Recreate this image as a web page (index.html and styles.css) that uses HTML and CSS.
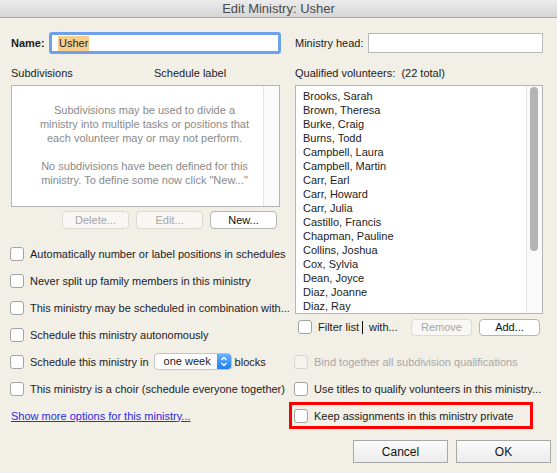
FILE: index.html
```html
<!DOCTYPE html>
<html>
<head>
<meta charset="utf-8">
<link rel="stylesheet" href="styles.css">
</head>
<body>
<div class="window">
  <div class="titlebar">Edit Ministry: Usher</div>
  <div class="main">
    <div class="col left">
      <div class="field-row">
        <span class="name-label">Name:</span>
        <div class="input focus"><span class="sel">Usher</span></div>
      </div>
      <div class="headers"><span class="sub-h">Subdivisions</span><span>Schedule label</span></div>
      <div class="subbox">
        <div class="subtext">
          <p>Subdivisions may be used to divide a<br>ministry into multiple tasks or positions that<br>each volunteer may or may not perform.</p>
          <p>No subdivisions have been defined for this<br>ministry. To define some now click "New..."</p>
        </div>
        <div class="track"></div>
      </div>
      <div class="btnrow">
        <div class="btn small disabled">Delete...</div>
        <div class="btn small disabled">Edit...</div>
        <div class="btn small">New...</div>
      </div>
      <div class="checks">
        <div class="row"><span class="cb"></span>Automatically number or label positions in schedules</div>
        <div class="row"><span class="cb"></span>Never split up family members in this ministry</div>
        <div class="row"><span class="cb"></span>This ministry may be scheduled in combination with...</div>
        <div class="row"><span class="cb"></span>Schedule this ministry autonomously</div>
        <div class="row"><span class="cb"></span>Schedule this ministry in
          <span class="popup"><span class="popup-text">one week</span><span class="popup-arrow"><svg width="8" height="11" viewBox="0 0 8 11"><path d="M1.5 4 L4 1.5 L6.5 4 M1.5 7 L4 9.5 L6.5 7" fill="none" stroke="#fff" stroke-width="1.3"/></svg></span></span>
          <span class="after-popup">blocks</span></div>
        <div class="row"><span class="cb"></span>This ministry is a choir (schedule everyone together)</div>
        <div class="row"><a class="link" href="#">Show more options for this ministry...</a></div>
      </div>
    </div>
    <div class="col right">
      <div class="field-row">
        <span class="head-label">Ministry head:</span>
        <div class="input plain"></div>
      </div>
      <div class="headers"><span>Qualified volunteers:&nbsp; (22 total)</span></div>
      <div class="listbox">
        <div class="items">
          <div>Brooks, Sarah</div>
          <div>Brown, Theresa</div>
          <div>Burke, Craig</div>
          <div>Burns, Todd</div>
          <div>Campbell, Laura</div>
          <div>Campbell, Martin</div>
          <div>Carr, Earl</div>
          <div>Carr, Howard</div>
          <div>Carr, Julia</div>
          <div>Castillo, Francis</div>
          <div>Chapman, Pauline</div>
          <div>Collins, Joshua</div>
          <div>Cox, Sylvia</div>
          <div>Dean, Joyce</div>
          <div>Diaz, Joanne</div>
          <div>Diaz, Ray</div>
        </div>
        <div class="track list-track"><div class="thumb"></div></div>
      </div>
      <div class="filter-row">
        <span class="cb"></span>
        <span class="filter-text">Filter list</span>
        <span class="caret"></span>
        <span class="with">with...</span>
        <div class="btn mid disabled remove">Remove</div>
        <div class="btn mid">Add...</div>
      </div>
      <div class="rchecks">
        <div class="row dis"><span class="cb disabled"></span>Bind together all subdivision qualifications</div>
        <div class="row"><span class="cb"></span>Use titles to qualify volunteers in this ministry...</div>
        <div class="row highlight"><span class="cb"></span>Keep assignments in this ministry private</div>
      </div>
    </div>
  </div>
  <div class="footer">
    <div class="btn big">Cancel</div>
    <div class="btn big">OK</div>
  </div>
</div>
</body>
</html>
```
FILE: styles.css
```css
* { box-sizing: border-box; }
html, body { margin: 0; padding: 0; }
body {
  width: 557px;
  height: 473px;
  overflow: hidden;
  background: #f2efe7;
  font-family: "Liberation Sans", Arial, sans-serif;
  font-size: 11px;
  color: #1c1c1c;
}
.window { width: 557px; height: 473px; }
.titlebar {
  height: 18px;
  line-height: 17px;
  text-align: center;
  font-size: 13px;
  color: #4a4a4a;
  background: linear-gradient(#ececec, #d6d6d6);
  border-bottom: 1px solid #a9a9a9;
}
.main {
  display: flex;
  padding: 14px 0 0 11px;
  gap: 15px;
}
.col.left { width: 269px; }
.col.right { width: 248px; }

.field-row {
  display: flex;
  align-items: center;
  height: 22px;
}
.name-label { font-weight: bold; width: 38px; }
.input { background: #fff; height: 22px; }
.input.focus {
  flex: 1;
  border: 3px solid #6ea1ec;
  border-radius: 3px;
  padding: 1px 0 0 6px;
  line-height: 14px;
  margin-right: -1px;
}
.sel { background: #f9cd8e; padding: 0 1px 1px; display: inline-block; line-height: 14px; }
.head-label { width: 73px; }
.input.plain {
  width: 175px;
  height: 20px;
  border: 1px solid #b9b9b9;
}

.headers {
  margin-top: 12px;
  height: 14px;
  line-height: 14px;
  display: flex;
}
.sub-h { width: 143px; }

.subbox {
  margin-top: 5px;
  height: 122px;
  border: 1px solid #b5b5b5;
  background: #fff;
  display: flex;
}
.subtext {
  flex: 1;
  padding: 17px 0 0 14px;
  text-align: center;
  color: #8a8a8a;
  line-height: 14px;
}
.subtext p { margin: 0 0 14px; }
.track {
  width: 16px;
  background: #fafafa;
  border-left: 1px solid #e6e6e6;
}

.btnrow {
  margin-top: 4px;
  height: 18px;
  display: flex;
  justify-content: flex-end;
  gap: 7px;
  padding-right: 3px;
}
.btn {
  display: flex;
  align-items: center;
  justify-content: center;
  background: #fff;
  border: 1px solid #b4b4b4;
  border-radius: 4px;
  color: #111;
  flex: none;
}
.btn.small { width: 67px; height: 18px; }
.btn.disabled { background: #f8f7f3; border-color: #dcdad4; color: #a6a6a6; }

.checks { margin-top: 11px; }
.row {
  height: 27px;
  display: flex;
  align-items: center;
  white-space: nowrap;
}
.cb {
  width: 14px;
  height: 14px;
  border: 1px solid #a4a4a4;
  border-radius: 3px;
  background: #fff;
  margin: 0 6px 0 -1px;
  flex: none;
}
.cb.disabled { background: #f5f3ee; border-color: #d6d4ce; }
.row.dis { color: #a8a8a8; }

.popup {
  display: inline-flex;
  width: 78px;
  height: 17px;
  margin-left: 5px;
  border: 1px solid #c3c3c3;
  border-radius: 4px;
  background: #fff;
  overflow: hidden;
}
.popup-text { flex: 1; padding-left: 9px; line-height: 15px; }
.popup-arrow {
  width: 14px;
  background: linear-gradient(#69b1fb, #1c7ff4);
  display: flex;
  align-items: center;
  justify-content: center;
}
.after-popup { margin-left: 3px; }
.link { color: #2b2be0; text-decoration: underline; }

.listbox {
  margin-top: 5px;
  height: 229px;
  border: 1px solid #b5b5b5;
  background: #fff;
  display: flex;
  overflow: hidden;
}
.items {
  flex: 1;
  padding: 3px 0 0 7px;
  line-height: 14px;
  overflow: hidden;
}
.list-track { padding: 1px 4px 0 3px; }
.thumb {
  width: 8px;
  height: 164px;
  border-radius: 4px;
  background: #b4b4b4;
}

.filter-row {
  margin-top: 4px;
  height: 18px;
  display: flex;
  align-items: center;
  padding: 0 3px 0 4px;
  white-space: nowrap;
}
.filter-text { flex: none; }
.caret { flex: none; width: 1px; height: 13px; background: #111; margin-left: 3px; }
.with { flex: none; margin-left: 6px; }
.btn.mid { width: 61px; height: 17px; }
.btn.remove { margin-left: auto; margin-right: 7px; }

.rchecks { margin-top: 12px; }
.row.highlight {
  border: 3px solid #ff0000;
  margin-left: -6px;
  width: 244px;
  padding-left: 2px;
}
.row.highlight .cb { margin-left: 0; }

.footer {
  margin-top: 11px;
  display: flex;
  justify-content: flex-end;
  gap: 8px;
  padding-right: 6px;
}
.btn.big {
  width: 95px;
  height: 23px;
  border-radius: 0;
  border: 1px solid #a8a8a8;
  background: linear-gradient(#fbfbfb, #ebebeb);
  font-size: 12px;
}
```
